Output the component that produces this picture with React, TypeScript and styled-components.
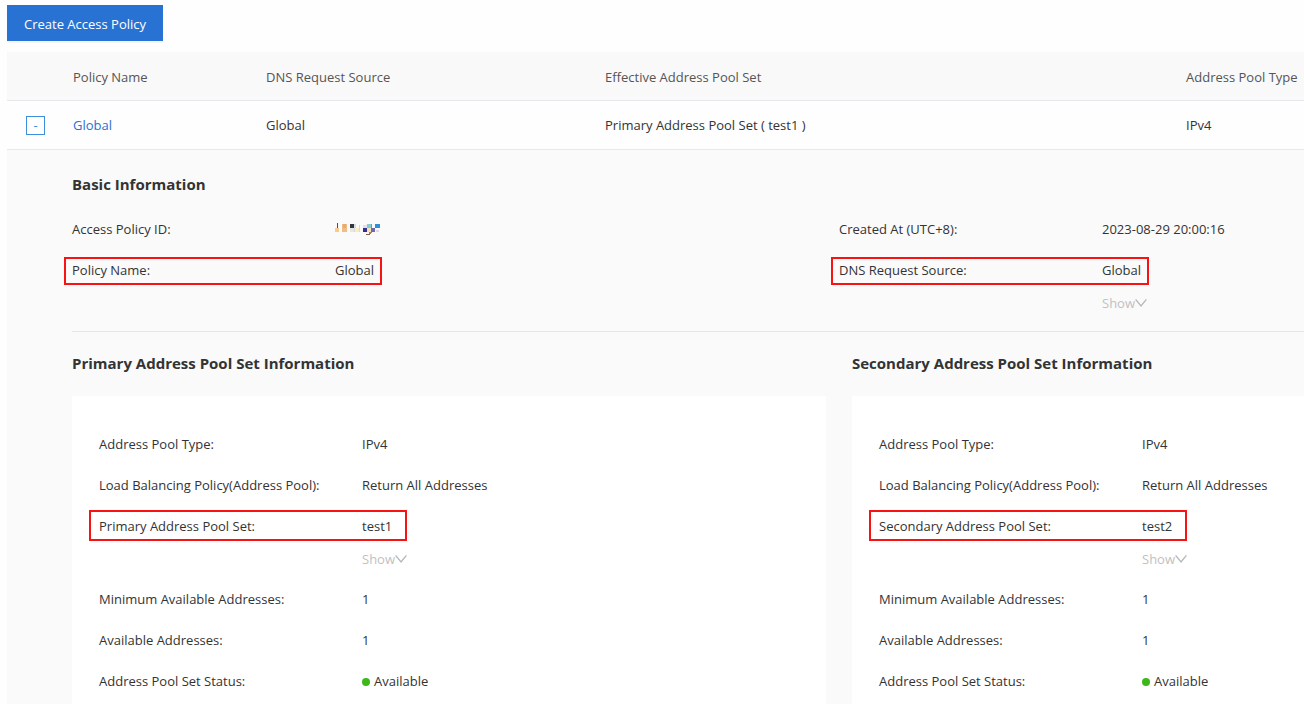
import React, { useState } from "react";
import styled, { createGlobalStyle } from "styled-components";

const GlobalStyle = createGlobalStyle`
  *, *::before, *::after { box-sizing: border-box; }
  body {
    margin: 0;
    background: #fefefe;
    color: #333;
    font-family: "Open Sans", "Noto Sans", sans-serif;
    font-size: 13px;
    line-height: 20px;
  }
  button { font: inherit; cursor: pointer; }
`;

const Page = styled.main`
  padding: 5px 0 0 7px;
  overflow-x: hidden;
`;

const PrimaryButton = styled.button`
  display: block;
  height: 36px;
  padding: 2px 17px 0;
  margin-bottom: 11px;
  border: 0;
  background: #2872d3;
  color: #fff;
  box-shadow: 0 2px 0 #f4f4f4;
  white-space: nowrap;
`;

const Table = styled.table`
  width: 100%;
  border-collapse: separate;
  border-spacing: 0;
  table-layout: fixed;
`;

const Column = styled.col<{ $width?: number }>`
  width: ${(p) => (p.$width ? `${p.$width}px` : "auto")};
`;

const HeaderCell = styled.th`
  height: 49px;
  padding: 1px 0 0 16px;
  border-bottom: 1px solid #e6e8ec;
  background: #f9f9f9;
  color: #555;
  font-weight: 400;
  text-align: left;
  white-space: nowrap;
`;

const Cell = styled.td`
  height: 49px;
  padding: 0 0 0 16px;
  border-bottom: 1px solid #e8e8e8;
  white-space: nowrap;
`;

const ToggleCell = styled(Cell)`
  padding-left: 19px;
`;

const ToggleButton = styled.button`
  display: flex;
  align-items: center;
  justify-content: center;
  width: 19px;
  height: 19px;
  padding: 0;
  border: 1px solid #3d8fdd;
  background: #fff;
  color: #3d8fdd;
`;

const PolicyLink = styled.a`
  color: #2f6fd0;
  text-decoration: none;
`;

const DetailCell = styled.td`
  padding: 22px 0 0 65px;
  background: #fafafa;
`;

const Heading = styled.h2`
  margin: 0;
  font-size: 15px;
  line-height: 24px;
  font-weight: 700;
  white-space: nowrap;
`;

const BasicGrid = styled.div`
  display: grid;
  grid-template-columns: 767fr 465fr;
  padding: 13px 0 8px;
  border-bottom: 1px solid #e6e6e6;
`;

const PoolGrid = styled.div`
  display: grid;
  grid-template-columns: 754fr 452fr;
  column-gap: 26px;
  padding-top: 19px;
`;

const PoolSection = styled.section`
  min-width: 0;
`;

const Card = styled.div`
  margin-top: 21px;
  padding: 28px 0 2px 27px;
  background: #fff;
`;

const Fields = styled.dl`
  margin: 0;
  min-width: 0;
`;

const FieldRow = styled.div<{ $mark?: "compact" | "roomy" }>`
  position: relative;
  display: grid;
  grid-template-columns: 263px 1fr;
  align-items: center;
  height: 41px;
  padding-bottom: 1px;
  white-space: nowrap;

  &::after {
    content: ${(p) => (p.$mark ? '""' : "none")};
    position: absolute;
    top: ${(p) => (p.$mark === "roomy" ? 4 : 7)}px;
    left: ${(p) => (p.$mark === "roomy" ? -10 : -8)}px;
    width: 318px;
    height: ${(p) => (p.$mark === "roomy" ? 31 : 28)}px;
    border: 2px solid #f91212;
    pointer-events: none;
  }
`;

const Label = styled.dt`
  margin: 0;
`;

const Value = styled.dd`
  display: flex;
  align-items: center;
  margin: 0;
`;

const ShowLine = styled.div`
  height: 32px;
  padding: 2px 0 0 263px;
`;

const ShowButton = styled.button`
  display: flex;
  align-items: center;
  padding: 0;
  border: 0;
  background: transparent;
  color: #c1c1c1;
`;

const StatusDot = styled.span`
  width: 8px;
  height: 8px;
  margin: 2px 4px 0 0;
  border-radius: 50%;
  background: #3cb81a;
`;

function Chevron() {
  return (
    <svg width="12" height="10" viewBox="0 0 12 10" fill="none" stroke="#b8b8b8" strokeWidth="1.4" aria-hidden="true">
      <path d="M0.6 1.4 L6 8 L11.4 1.4" />
    </svg>
  );
}

function MaskedId() {
  return (
    <svg width="48" height="14" viewBox="0 0 48 14" shapeRendering="crispEdges" role="img" aria-label="Hidden ID">
      <rect x="0" y="6" width="4" height="4" fill="#fbc98c" />
      <rect x="2" y="1" width="1" height="5" fill="#4a4a52" />
      <rect x="7" y="2" width="5" height="8" fill="#f0bd86" />
      <rect x="8" y="2" width="3" height="4" fill="#e6ab6d" />
      <rect x="15" y="2" width="4" height="4" fill="#34363a" />
      <rect x="15" y="6" width="4" height="4" fill="#e9e5e0" />
      <rect x="19" y="2" width="2" height="8" fill="#cfdbe2" />
      <rect x="20" y="6" width="4" height="4" fill="#fcebbd" />
      <rect x="24" y="3" width="1" height="7" fill="#d8d8de" />
      <rect x="28" y="3" width="4" height="3" fill="#e6dfea" />
      <rect x="28" y="6" width="4" height="4" fill="#322f91" />
      <rect x="32" y="2" width="4" height="4" fill="#86cdd0" />
      <rect x="32" y="6" width="4" height="4" fill="#f2e3b8" />
      <rect x="36" y="2" width="1" height="9" fill="#b98555" />
      <rect x="31" y="12" width="4" height="1" fill="#8a6040" />
      <rect x="34" y="10" width="2" height="2" fill="#b87842" />
      <rect x="36" y="6" width="4" height="4" fill="#7266b4" />
      <rect x="40" y="2" width="5" height="4" fill="#2f8fd8" />
      <rect x="41" y="8" width="3" height="2" fill="#dadbe4" />
    </svg>
  );
}

interface FieldProps {
  label: string;
  mark?: "compact" | "roomy";
  children: React.ReactNode;
}

function Field({ label, mark, children }: FieldProps) {
  return (
    <FieldRow $mark={mark}>
      <Label>{label}</Label>
      <Value>{children}</Value>
    </FieldRow>
  );
}

function ShowMore() {
  return (
    <ShowLine>
      <ShowButton type="button">
        Show
        <Chevron />
      </ShowButton>
    </ShowLine>
  );
}

function AddressPool({ kind, pool }: { kind: string; pool: string }) {
  return (
    <PoolSection>
      <Heading>{kind} Address Pool Set Information</Heading>
      <Card>
        <Fields>
          <Field label="Address Pool Type:">IPv4</Field>
          <Field label="Load Balancing Policy(Address Pool):">Return All Addresses</Field>
          <Field label={`${kind} Address Pool Set:`} mark="roomy">{pool}</Field>
        </Fields>
        <ShowMore />
        <Fields>
          <Field label="Minimum Available Addresses:">1</Field>
          <Field label="Available Addresses:">1</Field>
          <Field label="Address Pool Set Status:">
            <StatusDot />
            Available
          </Field>
        </Fields>
      </Card>
    </PoolSection>
  );
}

export default function App() {
  const [open, setOpen] = useState(true);

  return (
    <>
      <GlobalStyle />
      <Page>
        <PrimaryButton type="button">Create Access Policy</PrimaryButton>
        <Table>
          <colgroup>
            <Column $width={50} />
            <Column $width={193} />
            <Column $width={339} />
            <Column />
            <Column $width={134} />
          </colgroup>
          <thead>
            <tr>
              <HeaderCell />
              <HeaderCell scope="col">Policy Name</HeaderCell>
              <HeaderCell scope="col">DNS Request Source</HeaderCell>
              <HeaderCell scope="col">Effective Address Pool Set</HeaderCell>
              <HeaderCell scope="col">Address Pool Type</HeaderCell>
            </tr>
          </thead>
          <tbody>
            <tr>
              <ToggleCell>
                <ToggleButton type="button" aria-expanded={open} onClick={() => setOpen(!open)}>
                  {open ? "-" : "+"}
                </ToggleButton>
              </ToggleCell>
              <Cell><PolicyLink href="#global">Global</PolicyLink></Cell>
              <Cell>Global</Cell>
              <Cell>Primary Address Pool Set ( test1 )</Cell>
              <Cell>IPv4</Cell>
            </tr>
            {open && (
              <tr>
                <DetailCell colSpan={5}>
                  <Heading>Basic Information</Heading>
                  <BasicGrid>
                    <Fields>
                      <Field label="Access Policy ID:"><MaskedId /></Field>
                      <Field label="Policy Name:" mark="compact">Global</Field>
                    </Fields>
                    <div>
                      <Fields>
                        <Field label="Created At (UTC+8):">2023-08-29 20:00:16</Field>
                        <Field label="DNS Request Source:" mark="compact">Global</Field>
                      </Fields>
                      <ShowMore />
                    </div>
                  </BasicGrid>
                  <PoolGrid>
                    <AddressPool kind="Primary" pool="test1" />
                    <AddressPool kind="Secondary" pool="test2" />
                  </PoolGrid>
                </DetailCell>
              </tr>
            )}
          </tbody>
        </Table>
      </Page>
    </>
  );
}
